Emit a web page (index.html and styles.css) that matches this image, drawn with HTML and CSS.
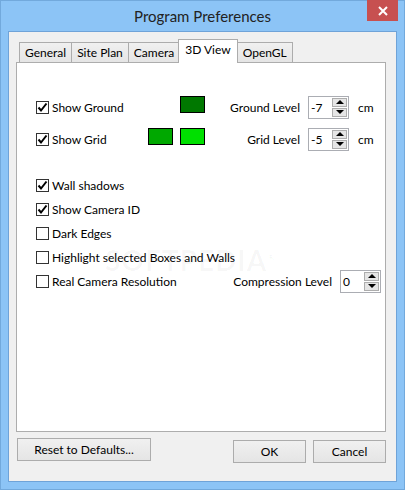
FILE: index.html
```html
<!DOCTYPE html>
<html>
<head>
<meta charset="utf-8">
<link rel="stylesheet" href="styles.css">
</head>
<body>
<div class="window">
  <div class="titlebar">
    <div></div>
    <div class="title">Program Preferences</div>
    <div class="close"><svg width="10" height="10" viewBox="0 0 10 10"><path d="M1 1L9 9M9 1L1 9" stroke="#fff" stroke-width="2"/></svg></div>
  </div>
  <div class="client">
    <div class="tabs">
      <div class="tab">General</div>
      <div class="tab">Site Plan</div>
      <div class="tab">Camera</div>
      <div class="tab active">3D View</div>
      <div class="tab">OpenGL</div>
    </div>
    <div class="panel">
      <div class="toprow">
        <label class="check"><span class="cb on"><svg width="11" height="11" viewBox="0 0 11 11"><path d="M1.5 5.5L4 8.5L9.5 1.5" fill="none" stroke="#000" stroke-width="2"/></svg></span>Show Ground</label>
        <div class="swatches"><span class="sw ground"></span></div>
        <span class="lvl">Ground Level</span>
        <div class="spin"><span class="val">-7</span><span class="arrows"><span class="ab"><i class="up"></i></span><span class="ab"><i class="down"></i></span></span></div>
        <span class="unit">cm</span>
      </div>
      <div class="toprow">
        <label class="check"><span class="cb on"><svg width="11" height="11" viewBox="0 0 11 11"><path d="M1.5 5.5L4 8.5L9.5 1.5" fill="none" stroke="#000" stroke-width="2"/></svg></span>Show Grid</label>
        <div class="swatches"><span class="sw grid1"></span><span class="sw grid2"></span></div>
        <span class="lvl">Grid Level</span>
        <div class="spin"><span class="val">-5</span><span class="arrows"><span class="ab"><i class="up"></i></span><span class="ab"><i class="down"></i></span></span></div>
        <span class="unit">cm</span>
      </div>
      <div class="list">
        <label class="check row"><span class="cb on"><svg width="11" height="11" viewBox="0 0 11 11"><path d="M1.5 5.5L4 8.5L9.5 1.5" fill="none" stroke="#000" stroke-width="2"/></svg></span>Wall shadows</label>
        <label class="check row"><span class="cb on"><svg width="11" height="11" viewBox="0 0 11 11"><path d="M1.5 5.5L4 8.5L9.5 1.5" fill="none" stroke="#000" stroke-width="2"/></svg></span>Show Camera ID</label>
        <label class="check row"><span class="cb"></span>Dark Edges</label>
        <label class="check row"><span class="cb"></span>Highlight selected Boxes and Walls</label>
        <div class="lastrow">
          <label class="check"><span class="cb"></span>Real Camera Resolution</label>
          <span class="lvl">Compression Level</span>
          <div class="spin"><span class="val">0</span><span class="arrows"><span class="ab"><i class="up"></i></span><span class="ab"><i class="down"></i></span></span></div>
        </div>
      </div>
      <div class="watermark">SOFTPEDIA<sup>®</sup></div>
    </div>
    <div class="buttons">
      <button class="btn reset">Reset to Defaults...</button>
      <button class="btn ok">OK</button>
      <button class="btn cancel">Cancel</button>
    </div>
  </div>
</div>
</body>
</html>
```

FILE: styles.css
```css
* { box-sizing: border-box; }
html, body { margin: 0; padding: 0; }
body {
  width: 405px;
  height: 490px;
  font-family: "Lato", "Noto Sans", sans-serif;
  font-size: 12px;
  color: #000;
  overflow: hidden;
}
.window {
  width: 405px;
  height: 490px;
  background: #8cc4f6;
  border: 1px solid #72a9dc;
  display: flex;
  flex-direction: column;
}
.titlebar {
  height: 30px;
  display: grid;
  grid-template-columns: 1fr auto 1fr;
  align-items: start;
}
.title {
  font-size: 15px;
  color: #222;
  margin-top: 6px;
  white-space: nowrap;
}
.close {
  justify-self: end;
  margin-right: 6px;
  margin-top: -1px;
  width: 31px;
  height: 21px;
  background: #c75050;
  display: flex;
  align-items: center;
  justify-content: center;
}
.client {
  margin: 0 7px 0 7px;
  height: 451px;
  background: #f0f0f0;
  border: 1px solid #6fa3d8;
  padding: 7px 0 0 7px;
}
.tabs {
  display: flex;
  height: 23px;
  align-items: flex-end;
  margin-left: 3px;
  position: relative;
  z-index: 1;
}
.tab {
  height: 20px;
  padding: 0 5px;
  border: 1px solid #acacac;
  border-bottom: none;
  background: linear-gradient(#f0f0f0, #e5e5e5);
  margin-right: -1px;
  line-height: 19px;
  white-space: nowrap;
}
.tab.active {
  background: #fff;
  margin-left: -1px;
  margin-right: -1px;
  padding: 0 6px;
  line-height: 19px;
  margin-bottom: -1px;
  position: relative;
  z-index: 2;
  height: 24px;
}
.panel {
  width: 370px;
  height: 370px;
  background: #fff;
  border: 1px solid #adadad;
  padding: 32px 0 0 19px;
  position: relative;
}
.toprow {
  display: grid;
  grid-template-columns: 112px 57px 103px 41px auto;
  height: 24px;
  align-items: center;
  margin-bottom: 8px;
}
.check {
  display: flex;
  align-items: center;
  white-space: nowrap;
}
.cb {
  width: 13px;
  height: 13px;
  border: 1px solid #333;
  background: #fff;
  margin-right: 3px;
  display: flex;
  align-items: center;
  justify-content: center;
  flex: none;
}
.swatches {
  display: flex;
  justify-content: flex-end;
  gap: 7px;
  align-self: start;
  margin-top: 1px;
}
.sw {
  width: 25px;
  height: 17px;
  border: 1px solid #000;
}
.ground { background: #007800; }
.grid1 { background: #00a800; }
.grid2 { background: #00e000; }
.lvl {
  text-align: right;
  padding-right: 8px;
  white-space: nowrap;
}
.spin {
  width: 41px;
  height: 23px;
  border: 1px solid #abadb3;
  background: #fff;
  display: flex;
  justify-content: space-between;
  align-items: center;
  padding: 0 1px 0 2px;
}
.arrows {
  display: flex;
  flex-direction: column;
  gap: 1px;
}
.ab {
  width: 15px;
  height: 9px;
  background: #e5e5e5;
  border: 1px solid #adadad;
  display: flex;
  align-items: center;
  justify-content: center;
}
.up, .down {
  width: 0;
  height: 0;
  border-left: 4px solid transparent;
  border-right: 4px solid transparent;
}
.up { border-bottom: 4px solid #000; }
.down { border-top: 4px solid #000; }
.unit { padding-left: 9px; }
.list {
  margin-top: 22px;
  display: flex;
  flex-direction: column;
}
.row { height: 24px; }
.lastrow {
  display: grid;
  grid-template-columns: 197px 107px 41px;
  height: 24px;
  align-items: center;
}
.watermark {
  position: absolute;
  left: 88px;
  top: 180px;
  font-size: 28px;
  font-weight: bold;
  letter-spacing: 1px;
  color: rgba(0, 0, 0, 0.035);
  pointer-events: none;
}
.watermark sup { font-size: 10px; }
.buttons {
  display: flex;
  align-items: flex-start;
  margin-top: 6px;
  margin-left: 1px;
}
.btn {
  font-family: inherit;
  font-size: 12px;
  color: #000;
  height: 23px;
  border: 1px solid #acacac;
  background: linear-gradient(#f0f0f0, #e5e5e5);
  padding: 0;
  margin: 0;
}
.reset { width: 134px; }
.ok { width: 73px; margin-left: 82px; margin-top: 2px; }
.cancel { width: 73px; margin-left: 7px; margin-top: 2px; }
```
